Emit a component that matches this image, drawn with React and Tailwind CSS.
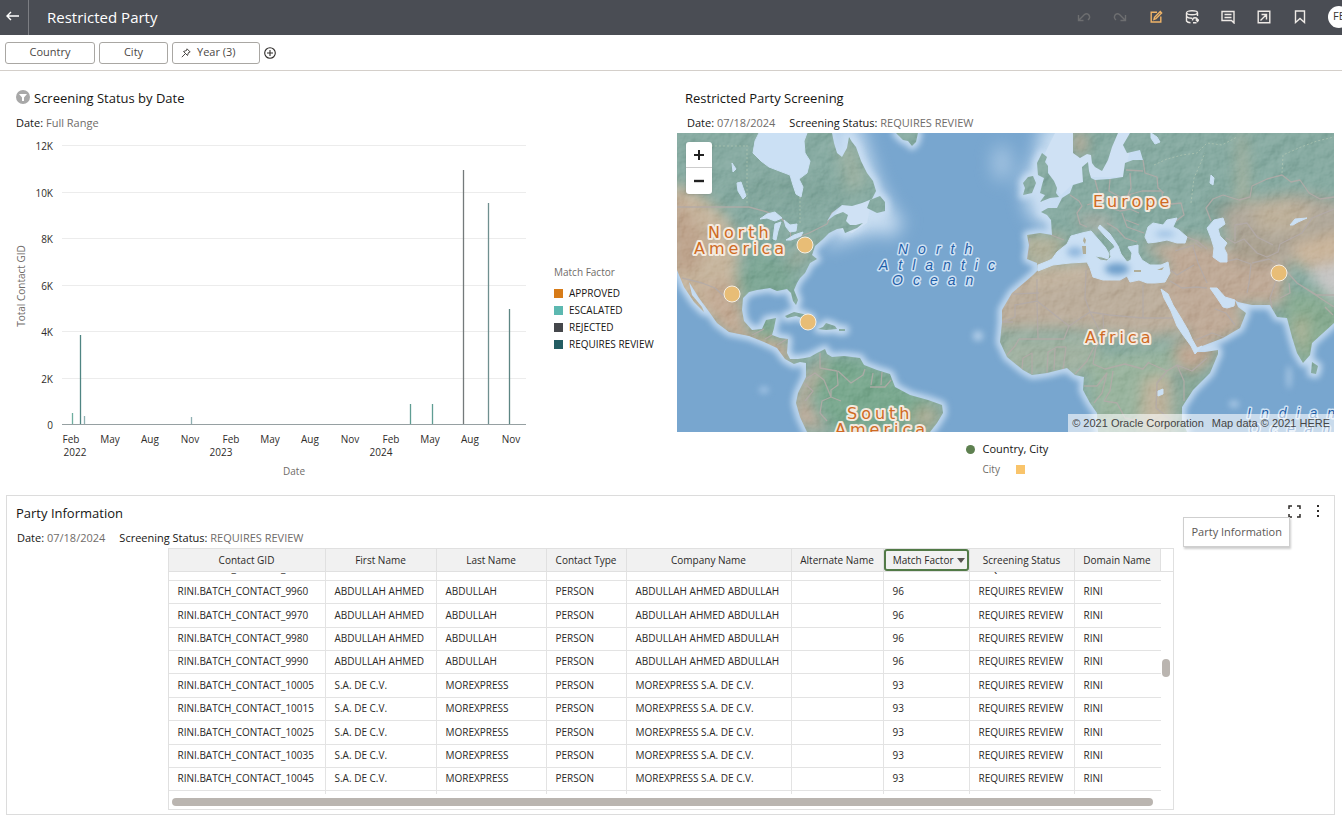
import {useEffect, useRef} from "react";

const filters = [
  {label: "Country", width: "w-[90px] justify-center"},
  {label: "City", width: "w-[69px] justify-center"},
  {label: "Year (3)", width: "w-[88px] pl-2", pinned: true},
];

const yTicks = ["12K", "10K", "8K", "6K", "4K", "2K", "0"];

const xTicks = [
  {x: 65, month: "Feb"},
  {x: 104, month: "May"},
  {x: 144, month: "Aug"},
  {x: 184, month: "Nov"},
  {x: 225, month: "Feb"},
  {x: 264, month: "May"},
  {x: 304, month: "Aug"},
  {x: 344, month: "Nov"},
  {x: 385, month: "Feb"},
  {x: 424, month: "May"},
  {x: 464, month: "Aug"},
  {x: 505, month: "Nov"},
];

const years = [
  {x: 69, label: "2022"},
  {x: 215, label: "2023"},
  {x: 375, label: "2024"},
];

const bars = [
  {x: 66, top: 279, color: "#6fae9f"},
  {x: 74, top: 201, color: "#4f8583"},
  {x: 78, top: 282, color: "#8fb0b2"},
  {x: 185, top: 283, color: "#8fb0b2"},
  {x: 404, top: 270, color: "#5f9d93"},
  {x: 426, top: 270, color: "#5f9d93"},
  {x: 457, top: 36, color: "#747a7b"},
  {x: 482, top: 69, color: "#6f8f8f"},
  {x: 503, top: 175, color: "#5d8583"},
];

const legend = [
  {label: "APPROVED", color: "bg-[#d77b18]"},
  {label: "ESCALATED", color: "bg-[#5cb8b0]"},
  {label: "REJECTED", color: "bg-[#45474b]"},
  {label: "REQUIRES REVIEW", color: "bg-[#245d63]"},
];

const columns = [
  {label: "Contact GID", width: "w-[157px]"},
  {label: "First Name", width: "w-[111px]"},
  {label: "Last Name", width: "w-[110px]"},
  {label: "Contact Type", width: "w-[80px]"},
  {label: "Company Name", width: "w-[165px]"},
  {label: "Alternate Name", width: "w-[92px]"},
  {label: "Match Factor", width: "w-[86px]", sorted: true},
  {label: "Screening Status", width: "w-[105px]"},
  {label: "Domain Name", width: "w-[86px]"},
];

const abdullah = ["ABDULLAH AHMED", "ABDULLAH", "PERSON", "ABDULLAH AHMED ABDULLAH", "", "96"];
const morexpress = ["S.A. DE C.V.", "MOREXPRESS", "PERSON", "MOREXPRESS S.A. DE C.V.", "", "93"];

const rows = [
  {id: 9950, party: abdullah},
  {id: 9960, party: abdullah},
  {id: 9970, party: abdullah},
  {id: 9980, party: abdullah},
  {id: 9990, party: abdullah},
  {id: 10005, party: morexpress},
  {id: 10015, party: morexpress},
  {id: 10025, party: morexpress},
  {id: 10035, party: morexpress},
  {id: 10045, party: morexpress},
  {id: 10055, party: morexpress},
];

const landPath = `
  M0 0H155L157 10L160 20L165 24L170 15L172 4L175 9L179 14L184 28L190 40L196 48L199 58L195 66L185 70L175 73L165 72L155 80L150 88L158 82L166 79L171 82L169 88L173 92L179 92L186 90L180 95L168 100L166 95L160 96L152 100L145 107L138 113L135 122L140 126L133 130L128 140L123 145L120 150L117 157L121 167L119 172L116 168L114 160L110 156L100 158L93 155L80 157L72 159L66 165L65 177L67 188L75 197L85 196L89 187L99 185L97 195L95 202L103 205L111 206L110 220L113 226L121 226L128 225L133 224L140 220L148 216L150 221L155 224L167 223L183 225L187 232L200 237L213 241L218 254L233 262L251 267L265 272L266 280L260 290L253 299H130L123 284L119 270L121 260L125 252L129 244L129 230L123 229L117 231L108 226L100 215L87 209L72 203L52 199L40 190L33 180L22 165L12 149L15 162L25 174L27 179L17 169L7 154L0 137Z
  M219 0L226 7L231 8L235 13L239 9L241 0Z
  M193 67L203 63L208 69L208 78L200 80L190 75Z
  M365 20L370 24L368 29L371 33L371 40L377 48L380 55L379 60L382 64L373 65L363 69L368 62L363 60L365 52L367 45L361 42L360 30Z
  M346 50L351 44L356 43L359 50L355 60L346 62L348 55Z
  M396 0L396 20L403 25L410 21L414 22L415 30L418 34L425 38L431 27L435 14L441 0Z
  M350 102L363 100L375 102L374 87L370 82L364 79L371 75L380 75L385 65L393 60L396 52L406 49L405 34L411 29L412 38L414 45L418 47L433 46L446 44L448 30L456 27L466 27L463 17L450 20L446 12L453 0H657V190L646 200L635 210L633 222L626 230L620 220L615 204L610 185L600 184L593 172L575 172L561 169L558 167L561 174L569 180L563 195L546 205L520 215L518 219L528 219L541 217L541 221L533 240L516 257L505 274L505 287L510 299H421L420 280L413 270L406 257L407 244L398 242L390 235L370 240L355 242L346 237L330 224L323 209L325 190L325 177L335 160L348 149L356 142L361 137L360 130L350 126L352 112Z
  M108 183L117 179L126 181L135 185L128 186L119 183L110 185Z
  M146 194L149 190L158 193L160 196L149 197L141 196Z
  M162 196H168V198H162Z
  M635 229L641 233L639 241L634 240Z`;

const inlandWater = `
  M82 0L78 8L76 20L84 28L92 34L105 39L113 42L116 52L119 61L124 64L126 54L122 46L130 40L133 28L128 20L127 8L130 0Z
  M83 86L90 81L98 79L105 85L98 88L90 85Z
  M98 91L104 89L101 98L99 107L96 106Z
  M107 87L113 92L120 91L119 98L113 99L109 94Z
  M109 107L117 102L126 99L124 103L114 107Z
  M60 50L64 49L69 63L66 66L61 58Z
  M55 30L59 36L56 39Z
  M361 132L371 128L375 126L380 119L390 111L394 103L405 100L414 98L421 106L428 114L432 121L431 126L425 124L418 123L423 127L430 128L434 124L433 118L438 114L436 111L428 103L421 95L423 92L433 101L441 113L444 121L450 129L454 127L455 120L451 114L461 112L461 120L465 127L473 132L484 132L491 129L493 140L488 149L478 150L470 150L462 147L453 149L450 143L443 147L432 147L426 147L416 144L413 135L410 129L393 130L376 132L361 138Z
  M468 104L471 94L476 90L486 92L490 87L500 85L496 94L502 97L510 104L508 110L500 110L490 107L480 109L471 110Z
  M530 95L537 87L546 85L548 91L541 96L543 103L550 110L547 115L550 121L550 129L543 129L536 124L537 115L534 105Z
  M484 156L491 161L496 172L504 185L511 197L515 206L520 215L525 213L518 221L514 213L506 202L500 193L494 178L487 165Z
  M533 155L540 155L548 164L558 167L557 173L550 175L546 174L540 165Z
  M474 0L480 4L483 9L478 11L474 5Z
  M481 258L486 256L486 261L481 263Z
  M613 92L618 86L630 85L621 89L616 92Z
  M534 42L537 45L536 52L533 50Z`;

const borders = `
  M0 74H72L90 79L105 86L113 95L114 107L132 100L140 96L150 91L155 80L163 75
  M5 145L25 150L38 155L50 166L62 168
  M75 202L87 196M88 206L95 202M100 212L110 206
  M129 246L138 240L147 247L154 264L164 268M143 220L143 235L160 238L161 252L154 257L154 264L145 268L143 280L150 288
  M161 238L174 250L186 242L188 236M194 252L196 240M204 252L205 239M214 247L208 254H193
  M127 250L136 258L128 268
  M374 102L387 107M393 62L402 68L405 73L400 80L403 91L410 94
  M350 126L353 105M418 47L421 58L427 66L433 75L443 78L453 76L462 80M427 66L410 72
  M453 40L454 55L451 62L465 58L485 58M466 27L468 40L480 44L481 55L487 60M449 37L466 38M485 58L486 72L504 70L507 82L499 88M433 46L432 58L443 64L454 62M445 80L450 94L467 100M430 90L440 96L448 105L460 109M462 92L449 87
  M534 88L529 75L536 66L546 62L562 67L573 64L575 53L590 46L605 42L614 49L623 47L632 60L643 66L657 64
  M549 105L558 110L567 106L580 120L590 124L601 119L603 111L625 100L635 85L657 76M558 108L558 92L570 90L580 104L596 112
  M510 104L520 108L530 116M516 113L521 130L530 150M517 112L498 118M518 110L525 115M550 128L560 126L574 131L572 150L570 160M575 130L592 126L605 133L620 150L657 174M600 145L593 165L595 175
  M492 136L500 142L517 132M493 148L505 155L520 154L530 155
  M336 161L362 160M336 189H325M360 146V168L338 172V184L325 189M360 168L392 193L413 179L408 165L409 137M360 170L361 206H342M392 193L387 206H361M413 179L432 182L466 185V162M466 152V185H497M413 179L426 205L419 214L416 231M426 182L427 205M416 231L428 236L448 231L466 236L472 229M330 222L338 213L342 206M345 236L346 225L355 220V241M370 240L371 219L380 214L389 214M377 237L378 216M386 237L389 214M398 241L410 228L417 214M407 253H420L430 240L425 260L417 270M436 238L433 258L427 268L440 270L448 285L470 290M472 230L490 238L500 232L515 238L530 225M490 238L480 250L479 275L494 287M500 232L507 248V268
  M558 192L549 180L538 176M519 207L535 200L549 205M603 165L613 160L612 150M620 150L640 162H657M656 182L648 174`;

const cities = [
  {x: 128, y: 112},
  {x: 55, y: 161},
  {x: 131, y: 189},
  {x: 602, y: 140},
];

const LandLabel = ({x, y, children}) => (
  <text
    x={x}
    y={y}
    paintOrder="stroke"
    strokeLinejoin="round"
    className="fill-[#cf6a24] stroke-[#f3eadf] stroke-[4px] font-['DejaVu_Sans',sans-serif] text-[16px] tracking-[4px]"
  >
    {children}
  </text>
);

const OceanLabel = ({x, y, children}) => (
  <text
    x={x}
    y={y}
    paintOrder="stroke"
    strokeLinejoin="round"
    className="fill-[#1f5fa8] stroke-[#cfe2f4] stroke-[3px] font-['Liberation_Sans',sans-serif] text-[14px] tracking-[10px] italic"
  >
    {children}
  </text>
);

const WorldMap = () => (
  <svg
    viewBox="0 0 657 299"
    preserveAspectRatio="xMidYMid slice"
    className="block h-[299px] w-full"
    role="img"
    aria-label="Map of screened parties"
  >
    <defs>
      <clipPath id="land">
        <path d={landPath} />
      </clipPath>
      <filter id="soft" x="-50%" y="-50%" width="200%" height="200%" colorInterpolationFilters="sRGB">
        <feGaussianBlur stdDeviation="9" />
      </filter>
      <filter id="ground" x="-50%" y="-50%" width="200%" height="200%" colorInterpolationFilters="sRGB">
        <feGaussianBlur stdDeviation="7" />
      </filter>
      <filter id="shore" x="-10%" y="-10%" width="120%" height="120%" colorInterpolationFilters="sRGB">
        <feGaussianBlur stdDeviation="3" />
      </filter>
      <filter id="shoal" x="-200%" y="-200%" width="500%" height="500%" colorInterpolationFilters="sRGB">
        <feGaussianBlur stdDeviation="3" />
      </filter>
      <filter id="relief" x="0" y="0" width="100%" height="100%" colorInterpolationFilters="sRGB">
        <feTurbulence type="fractalNoise" baseFrequency="0.06" numOctaves="5" seed="8" result="noise" />
        <feDiffuseLighting in="noise" surfaceScale="3" lightingColor="#ffffff">
          <feDistantLight azimuth="225" elevation="34" />
        </feDiffuseLighting>
      </filter>
    </defs>

    <rect width="657" height="299" fill="#78a6cf" />

    {/* shallow water */}
    <g filter="url(#soft)" fill="#cbdff2">
      <path d="M150 -10H182L201 50L222 88L230 84L214 106L205 98L180 104L145 116L170 80Z" />
      <path d="M365 -10H470V60L390 75L374 98L352 82L345 50L358 25Z" />
      <ellipse cx="325" cy="30" rx="9" ry="18" opacity="0.6" />
    </g>
    <path d={landPath} fill="none" stroke="#c8ddf2" strokeWidth="8" strokeLinejoin="round" filter="url(#shore)" />
    <path d="M378 0H452V22L446 44H412L405 49L395 52L384 62L374 48L368 20Z" fill="#cfe1f4" />
    <path d="M165 72L195 66L190 90L175 100L150 92Z" fill="#cfe1f4" />
    <ellipse cx="87" cy="257" rx="5" ry="3" fill="#a9c9e8" filter="url(#shoal)" />
    <ellipse cx="301" cy="203" rx="5" ry="5" fill="#b5d0ea" filter="url(#shoal)" />
    <ellipse cx="612" cy="244" rx="2" ry="12" fill="#b5d0ea" filter="url(#shoal)" />
    <ellipse cx="557" cy="271" rx="5" ry="3" fill="#b5d0ea" filter="url(#shoal)" />

    {/* terrain */}
    <g clipPath="url(#land)">
      <rect width="657" height="299" fill="#86aaa1" />
      <g filter="url(#ground)">
        <path d="M-10 50L20 58L50 85L62 110L60 150L62 200L20 180L-10 150Z" fill="#c5b49c" />
        <path d="M-10 60L14 80L30 110L20 140L-10 140Z" fill="#bda38c" />
        <path d="M20 150H62L70 200L110 210L115 228H90L40 195Z" fill="#c2aa94" />
        <ellipse cx="110" cy="60" rx="60" ry="12" fill="#7ea399" />
        <path d="M104 140L120 118L140 104L124 128Z" fill="#a9ad99" />
        <path d="M62 145L80 115L115 135L118 170H62Z" fill="#7ba593" />
        <path d="M80 190L100 186V204L85 206Z" fill="#7aa78b" />
        <path d="M160 10L176 8L190 50L170 60Z" fill="#9bb0a1" />
        <path d="M116 290L122 255L136 236L150 222L142 246L130 266L150 299Z" fill="#c0ab99" />
        <path d="M150 226L185 228L260 272L255 299H160L135 262Z" fill="#78a78d" />
        <ellipse cx="248" cy="284" rx="14" ry="12" fill="#a9aa92" />
        <path d="M345 100L390 104L378 130H345Z" fill="#b2b099" />
        <path d="M400 82L430 84L438 96L406 94Z" fill="#b2aea6" />
        <path d="M325 140L410 126L500 146L520 196L470 206L395 196L310 196Z" fill="#bbad9b" />
        <path d="M350 138L412 128L405 145L350 155Z" fill="#c4b5a0" />
        <path d="M465 112L520 106L580 125L610 130L605 172L560 172L570 196L520 220L490 160L490 130Z" fill="#bea996" />
        <path d="M498 205L515 212L542 220L520 240L498 234Z" fill="#bea590" />
        <path d="M320 204H420L425 230L400 242H330Z" fill="#a0b1a0" />
        <path d="M410 225L500 215L480 299H420Z" fill="#98b39d" />
        <path d="M466 245L495 240V299H462Z" fill="#beb39c" />
        <path d="M505 245L525 235L510 280H498Z" fill="#87a491" />
        <path d="M540 74L580 66L620 60L670 70V130H560Z" fill="#aea698" />
        <path d="M575 72L610 66L640 78L620 98H580Z" fill="#bdb09a" />
        <path d="M560 108L600 108L596 128H560Z" fill="#a69d8b" />
        <path d="M534 68L555 70L545 82H532Z" fill="#7d9489" />
        <path d="M612 112L670 95V150L625 135Z" fill="#c8b399" />
        <path d="M628 134L670 128V176L645 158Z" fill="#c6c5c4" />
        <path d="M612 158L640 160L670 180V200L625 235L606 186Z" fill="#86aa90" />
        <path d="M616 188L632 182L628 225L618 205Z" fill="#afb296" />
        <ellipse cx="403" cy="10" rx="6" ry="12" fill="#bfa58e" />
        <path d="M561 0H568L572 70H560Z" fill="#a5af9b" />
      </g>
      <rect width="657" height="299" filter="url(#relief)" className="opacity-25 mix-blend-soft-light" />
      <path d={borders} fill="none" stroke="#b3aaa8" strokeWidth="1.3" opacity="0.85" strokeLinejoin="round" />
      <path
        d="M477 32L490 26L505 22L520 20L530 10L545 12L560 4M514 70L517 45L528 20M605 40L606 22L624 14L640 8L657 4M70 70V10M123 90V60M10 13H68"
        fill="none"
        stroke="#b9cbb5"
        strokeWidth="1"
        strokeDasharray="2 2"
        opacity="0.6"
      />
    </g>
    <path d={inlandWater} fill="#cbe0f4" stroke="#cbe0f4" strokeWidth="1" strokeLinejoin="round" />
    <ellipse cx="398" cy="119" rx="8" ry="5" fill="#8fb6dc" filter="url(#shoal)" />
    <ellipse cx="440" cy="136" rx="12" ry="6" fill="#6f9fcb" filter="url(#shoal)" />
    <ellipse cx="488" cy="101" rx="10" ry="3" fill="#9dc0e2" filter="url(#shoal)" />
    <path d="M405 113H409V121H406ZM407 104L409 107L408 111L406 108ZM480 137L487 134L485 137ZM457 137H464V139H457Z" fill="#b0ad98" />

    <LandLabel x="31" y="105">North</LandLabel>
    <LandLabel x="17" y="121">America</LandLabel>
    <LandLabel x="416" y="74">Europe</LandLabel>
    <LandLabel x="408" y="210">Africa</LandLabel>
    <LandLabel x="170" y="286">South</LandLabel>
    <LandLabel x="158" y="302">America</LandLabel>
    <OceanLabel x="221" y="121">North</OceanLabel>
    <OceanLabel x="202" y="137">Atlantic</OceanLabel>
    <OceanLabel x="215" y="152">Ocean</OceanLabel>
    <OceanLabel x="570" y="285">Indian</OceanLabel>
    <OceanLabel x="572" y="301">Ocean</OceanLabel>

    {cities.map((city) => (
      <circle key={city.x} cx={city.x} cy={city.y} r="8" fill="#e8bd76" stroke="#f5efe4" />
    ))}
  </svg>
);

const ToolbarIcon = ({label, color, children}) => (
  <button type="button" aria-label={label} className={`flex size-5 shrink-0 items-center justify-center ${color}`}>
    <svg viewBox="0 0 14 14" className="size-3.5" fill="none" stroke="currentColor" strokeWidth="1.4">
      {children}
    </svg>
  </button>
);

const Header = () => (
  <header className="flex h-[35px] items-center overflow-hidden bg-[#4a4d54] text-white">
    <button type="button" aria-label="Back" className="flex h-full w-[29px] shrink-0 items-center border-r border-[#7c7e83] pl-1.5">
      <svg viewBox="0 0 14 12" className="mb-1 h-3 w-3.5" fill="none" stroke="currentColor" strokeWidth="1.4">
        <path d="M13 6H1M5 2L1 6L5 10" />
      </svg>
    </button>
    <h1 className="ml-[18px] text-[15px] whitespace-nowrap">Restricted Party</h1>
    <div className="-mr-2 ml-auto flex items-center gap-4 pb-0.5">
      <ToolbarIcon label="Undo" color="text-[#6d6e70]">
        <path d="M1.500 5V10.500H6.500M1.500 10.500L7.500 4.500Q9.500 2.800 11.500 4.500Q14 7.500 11 10" />
      </ToolbarIcon>
      <ToolbarIcon label="Redo" color="text-[#6d6e70]">
        <path d="M12.500 5V10.500H7.500M12.500 10.500L6.500 4.500Q4.500 2.800 2.500 4.500Q0 7.500 3 10" />
      </ToolbarIcon>
      <ToolbarIcon label="Edit" color="text-[#efb468]">
        <path d="M8 2.200H2.200V12H11.800V6.500M5 9.400L5.500 7.400L11.300 1.600L12.600 2.900L6.900 8.700L5 9.400Z" />
      </ToolbarIcon>
      <ToolbarIcon label="Refresh data" color="text-[#eeeae6]">
        <ellipse cx="7" cy="2.800" rx="5.500" ry="2" />
        <path d="M1.500 3V11Q2.500 12.500 5.500 12.700M12.500 3V6M1.500 6.500Q3 8.300 7 8.300M7.500 10.500Q7.500 7.800 10 7.800Q12.500 7.800 12.500 10.500M10.800 9.500L12.500 11.500L14 9.500M8 12.800H11.500" />
      </ToolbarIcon>
      <ToolbarIcon label="Comments" color="text-[#eeeae6]">
        <path d="M1 1.500H13V13L10.500 10.500H1ZM3.500 4.500H10.500M3.500 7.500H10.500" />
      </ToolbarIcon>
      <ToolbarIcon label="Open" color="text-[#eeeae6]">
        <path d="M1.200 1.200H12.800V12.800H1.200ZM4.500 4.500H9.500V9.500M9.500 4.500L3.500 10.500" />
      </ToolbarIcon>
      <ToolbarIcon label="Bookmark" color="text-[#eeeae6]">
        <path d="M2.500 1H11.500V12.500L7 8.500L2.500 12.500Z" />
      </ToolbarIcon>
      <button type="button" className="ml-0.5 flex size-[22px] shrink-0 items-center justify-center rounded-full bg-white text-[11px] text-[#3a3632]">
        FE
      </button>
    </div>
  </header>
);

const FilterBar = () => (
  <nav className="flex h-9 items-center gap-1 border-b border-[#d4cfca] pl-[5px] text-[11px] text-[#4b4845]">
    {filters.map((filter) => (
      <button
        key={filter.label}
        type="button"
        className={`flex h-[22px] items-center gap-1.5 rounded-[3px] border border-[#a9a7a3] ${filter.width}`}
      >
        {filter.pinned && (
          <svg viewBox="0 0 10 10" className="size-2.5" fill="none" stroke="currentColor">
            <path d="M6 .8L9.200 4L7.500 4.500L6.500 7.500L2.500 3.500L5.500 2.500ZM4.300 5.700L.8 9.200" />
          </svg>
        )}
        {filter.label}
      </button>
    ))}
    <button type="button" aria-label="Add filter">
      <svg viewBox="0 0 12 12" className="size-3" fill="none" stroke="#2f2c2a" strokeWidth="1.1">
        <circle cx="6" cy="6" r="5.300" />
        <path d="M6 3V9M3 6H9" />
      </svg>
    </button>
  </nav>
);

const Criteria = ({items}) => (
  <p className="flex h-5 items-center gap-3.5 px-2.5 text-[11px] whitespace-nowrap text-[#161513]">
    {items.map((item) => (
      <span key={item.name}>
        {item.name}: <span className="text-[#6f6c69]">{item.value}</span>
      </span>
    ))}
  </p>
);

const Chart = () => (
  <div className="flex">
    <svg viewBox="0 -1 536 350" className="min-w-0 flex-1 text-[10px]" role="img" aria-label="Total contacts by date">
      {yTicks.map((tick, i) => {
        const y = Math.round(12 + i * 46.5) - 0.5;
        return (
          <g key={tick}>
            <text x="47" y={y + 4} textAnchor="end" fill="#2f2c2a">{tick}</text>
            <path d={`M56 ${y}H520`} stroke={tick === "0" ? "#96a0a2" : "#ececec"} />
          </g>
        );
      })}
      {bars.map((bar) => (
        <path key={bar.x} d={`M${bar.x}.5 ${bar.top}V290`} stroke={bar.color} strokeWidth="1.3" />
      ))}
      {xTicks.map((tick) => (
        <text key={tick.x} x={tick.x} y="309" textAnchor="middle" fill="#2f2c2a">{tick.month}</text>
      ))}
      {years.map((year) => (
        <text key={year.x} x={year.x} y="322" textAnchor="middle" fill="#2f2c2a">{year.label}</text>
      ))}
      <text x="288" y="341" textAnchor="middle" fill="#6f6c69">Date</text>
      <text x="-152" y="19" textAnchor="middle" transform="rotate(-90)" fill="#6f6c69">Total Contact GID</text>
    </svg>
    <div className="mt-[132px] ml-3 w-[109px] shrink-0 text-[10px] whitespace-nowrap text-[#161513]">
      <p className="text-[#6f6c69]">Match Factor</p>
      <ul className="mt-[5px]">
        {legend.map((entry) => (
          <li key={entry.label} className="flex h-[17px] items-center gap-1.5">
            <span className={`size-[9px] ${entry.color}`} />
            {entry.label}
          </li>
        ))}
      </ul>
    </div>
  </div>
);

const PartyTable = () => {
  const scroller = useRef(null);

  useEffect(() => {
    scroller.current.scrollTop = 15;
  }, []);

  return (
    <div className="relative mx-auto w-[1006px] border border-[#e0e0e0] text-[10px] text-[#2b2927]">
      <div ref={scroller} className="h-[245px] overflow-hidden">
        <table className="w-[991px] table-fixed border-separate border-spacing-0">
          <thead>
            <tr>
              {columns.map((column) => (
                <th
                  key={column.label}
                  scope="col"
                  className={`sticky top-0 h-[23px] border-r border-b border-[#e0e0e0] bg-[#f1f1f1] p-0 font-normal whitespace-nowrap ${column.width}`}
                >
                  {column.sorted ? (
                    <button type="button" className="flex h-[22px] w-full items-center justify-end gap-[3px] rounded-[3px] border-2 border-[#527a47] pr-0.5">
                      {column.label}
                      <svg viewBox="0 0 8 5" className="h-[5px] w-2" fill="#57534f">
                        <path d="M0 0H8L4 5Z" />
                      </svg>
                    </button>
                  ) : (
                    column.label
                  )}
                </th>
              ))}
            </tr>
          </thead>
          <tbody>
            {rows.map((row, i) => {
              const cells = [`RINI.BATCH_CONTACT_${row.id}`, ...row.party, "REQUIRES REVIEW", "RINI"];
              return (
                <tr key={row.id} className={i % 5 === 2 || i % 5 === 0 ? "h-6" : "h-[23px]"}>
                  {cells.map((cell, c) => (
                    <td
                      key={columns[c].label}
                      className="border-r border-b border-[#e3e3e3] p-0 pb-0.5 pl-[9px] leading-4 whitespace-nowrap last:border-r-0"
                    >
                      {cell}
                    </td>
                  ))}
                </tr>
              );
            })}
          </tbody>
        </table>
      </div>
      <div className="flex h-[15px] items-center pr-5 pl-[3px]">
        <div className="h-2 w-full rounded-full bg-[#bab5b0]" />
      </div>
      <div className="absolute top-[22px] right-0 w-3 border-b border-[#e0e0e0]" />
      <div className="absolute top-[110px] right-[3px] h-[18px] w-2 rounded-full bg-[#bab5b0]" />
    </div>
  );
};

const App = () => {
  return (
    <div className="min-h-screen overflow-x-hidden bg-white font-['Open_Sans','Noto_Sans',sans-serif]">
      <Header />
      <FilterBar />

      <main className="pr-[7px] pb-[7px] pl-1.5">
        <div className="grid grid-cols-2 gap-3.5 pt-[17px] pr-px">
          <section>
            <h2 className="flex h-[25px] items-start gap-1 pl-2.5 text-[13px] leading-5 text-[#161513]">
              <svg viewBox="0 0 14 14" className="mt-0.5 size-3.5">
                <circle cx="7" cy="7" r="7" fill="#a8a8a8" />
                <path d="M3 4H11L8 7.500V11H6V7.500Z" fill="#ffffff" />
              </svg>
              Screening Status by Date
            </h2>
            <Criteria items={[{name: "Date", value: "Full Range"}]} />
            <Chart />
          </section>

          <section>
            <h2 className="h-[25px] pl-2 text-[13px] leading-5 text-[#161513]">Restricted Party Screening</h2>
            <Criteria
              items={[
                {name: "Date", value: "07/18/2024"},
                {name: "Screening Status", value: "REQUIRES REVIEW"},
              ]}
            />
            <div className="relative">
              <WorldMap />
              {/* zoom controls */}
              <div className="absolute top-[9px] left-[9px] flex w-[26px] flex-col rounded-[3px] bg-white shadow">
                <button type="button" aria-label="Zoom in" className="flex h-[26px] items-center justify-center border-b border-[#cccccc]">
                  <svg viewBox="0 0 10 10" className="size-2.5" stroke="#222222" strokeWidth="2">
                    <path d="M5 0V10M0 5H10" />
                  </svg>
                </button>
                <button type="button" aria-label="Zoom out" className="flex h-[26px] items-center justify-center">
                  <svg viewBox="0 0 10 10" className="size-2.5" stroke="#222222" strokeWidth="2.400">
                    <path d="M0 5H10" />
                  </svg>
                </button>
              </div>
              <p className="absolute right-0 bottom-0 flex h-[18px] items-center gap-2 bg-white/60 px-1 font-['Liberation_Sans',sans-serif] text-[11px] whitespace-nowrap text-[#454545]">
                <span>© 2021 Oracle Corporation</span>
                <span>Map data © 2021 HERE</span>
              </p>
            </div>
            <div className="mx-auto mt-[7px] w-20 text-[11px] whitespace-nowrap text-[#161513]">
              <p className="flex h-5 items-center gap-2">
                <span className="size-[9px] shrink-0 rounded-full bg-[#5e8050]" />
                Country, City
              </p>
              <p className="flex h-5 items-center gap-4 pl-[17px] text-[10px] text-[#6f6c69]">
                City
                <span className="size-[9px] bg-[#f9c46b]" />
              </p>
            </div>
          </section>
        </div>

        <section className="relative mt-3 h-[320px] border border-[#dcdcdc]">
          <div className="flex items-start justify-between pt-2 pr-3 pl-[9px]">
            <h2 className="h-6 text-[13px] leading-[18px] text-[#161513]">Party Information</h2>
            <div className="flex gap-[13px]">
              <button type="button" aria-label="Maximize">
                <svg viewBox="0 0 13 13" className="size-[13px]" fill="none" stroke="#2f2c2a" strokeWidth="1.500">
                  <path d="M1 4V1H4M9 1H12V4M12 9V12H9M4 12H1V9" />
                </svg>
              </button>
              <button type="button" aria-label="Menu">
                <svg viewBox="0 0 8 14" className="h-3.5 w-2" fill="#2f2c2a">
                  <path d="M3 1H5V3H3ZM3 6H5V8H3ZM3 11H5V13H3Z" />
                </svg>
              </button>
            </div>
          </div>
          <Criteria
            items={[
              {name: "Date", value: "07/18/2024"},
              {name: "Screening Status", value: "REQUIRES REVIEW"},
            ]}
          />
          <PartyTable />
          <div role="tooltip" className="absolute top-[21px] right-11 flex h-[30px] items-center border border-[#cfcfcf] bg-white px-[7px] text-[11px] text-[#5b5855] shadow-[1px_2px_2px_rgba(0,0,0,0.2)]">
            Party Information
          </div>
        </section>
      </main>
    </div>
  );
};

export default App;
